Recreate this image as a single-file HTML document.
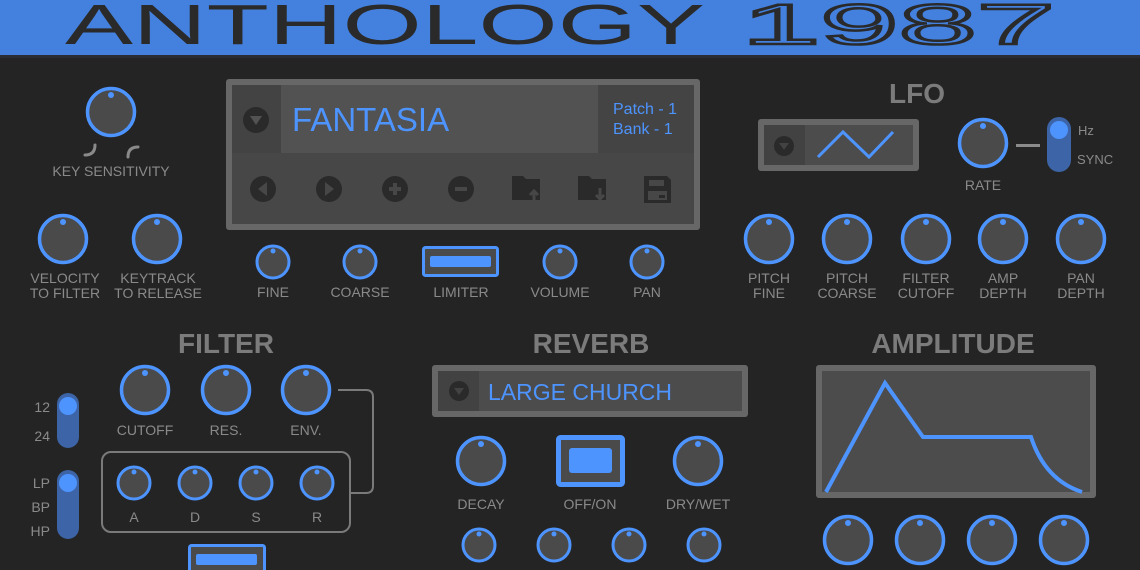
<!DOCTYPE html>
<html><head><meta charset="utf-8"><style>
html,body{margin:0;padding:0;background:#242424;}
svg{display:block}
text{font-family:"Liberation Sans",sans-serif;}
.lb{fill:#8a8a8a;font-size:14px;text-anchor:middle;}
.tt{fill:#7b7b7b;font-size:28px;text-anchor:middle;font-weight:bold;}
</style></head><body>
<svg width="1140" height="570" viewBox="0 0 1140 570" xmlns="http://www.w3.org/2000/svg">
<defs>
<g id="kb"><circle r="23.5" fill="#4a4a4a" stroke="#4d94ff" stroke-width="3.5"/><circle cx="0" cy="-17" r="3" fill="#4d94ff"/></g>
<g id="ks"><circle r="16" fill="#4a4a4a" stroke="#4d94ff" stroke-width="3"/><circle cx="0" cy="-11" r="2.5" fill="#4d94ff"/></g>
</defs>
<rect width="1140" height="570" fill="#242424"/>
<!-- header -->
<rect x="0" y="0" width="1140" height="55" fill="#4481de"/>
<rect x="0" y="55" width="1140" height="3" fill="#2a2d33"/>
<text x="65" y="44" font-size="57" fill="#2a2a2a" textLength="640" lengthAdjust="spacingAndGlyphs">ANTHOLOGY</text>
<text x="742" y="44" font-size="57" fill="none" stroke="#2a2a2a" stroke-width="2.5" textLength="313" lengthAdjust="spacingAndGlyphs">1987</text>

<!-- key sensitivity -->
<use href="#kb" x="111" y="112"/>
<path d="M95 145 q0 10 -10 10" fill="none" stroke="#8a8a8a" stroke-width="3" stroke-linecap="round"/>
<path d="M128 157 q0 -10 10 -10" fill="none" stroke="#8a8a8a" stroke-width="3" stroke-linecap="round"/>
<text class="lb" x="111" y="176">KEY SENSITIVITY</text>
<use href="#kb" x="63" y="239"/>
<use href="#kb" x="157" y="239"/>
<text class="lb" x="65" y="283">VELOCITY</text><text class="lb" x="65" y="298">TO FILTER</text>
<text class="lb" x="158" y="283">KEYTRACK</text><text class="lb" x="158" y="298">TO RELEASE</text>

<!-- display -->
<rect x="226" y="79" width="474" height="151" rx="3" fill="#676767"/>
<rect x="232" y="85" width="462" height="139" fill="#474747"/>
<rect x="232" y="85" width="49" height="68" fill="#434343"/>
<rect x="281" y="85" width="317" height="68" fill="#525252"/>
<rect x="598" y="85" width="96" height="68" fill="#444"/>
<circle cx="256" cy="120" r="13" fill="#2a2a2a"/><path d="M250 116 h12 l-6 9z" fill="#525252"/>
<text x="292" y="131" font-size="33" fill="#4d94ff">FANTASIA</text>
<text x="613" y="114" font-size="16" fill="#4d94ff">Patch - 1</text>
<text x="613" y="134" font-size="16" fill="#4d94ff">Bank - 1</text>
<g fill="#2a2a2a">
<circle cx="263" cy="189" r="13"/><circle cx="329" cy="189" r="13"/><circle cx="395" cy="189" r="13"/><circle cx="461" cy="189" r="13"/>
<path d="M512 176 h11 l3 3 h14 v21 h-28z"/><path d="M578 176 h11 l3 3 h14 v21 h-28z"/>
<path d="M644 176 h23 l4 4 v23 h-27z"/>
</g>
<path d="M267 182 l-9 7 9 7z" fill="#474747"/><path d="M325 182 l9 7 -9 7z" fill="#474747"/>
<path d="M389 189 h12 M395 183 v12" stroke="#474747" stroke-width="4"/>
<path d="M455 189 h12" stroke="#474747" stroke-width="4"/>
<path d="M534 202 v-10 M530 195 l4 -4 4 4" stroke="#474747" stroke-width="3" fill="none"/>
<path d="M600 188 v10 M596 195 l4 4 4 -4" stroke="#474747" stroke-width="3" fill="none"/>
<rect x="649" y="180" width="15" height="6" fill="#474747"/><rect x="648" y="191" width="19" height="9" fill="#474747"/><rect x="659" y="195" width="6" height="3" fill="#2a2a2a"/>

<use href="#ks" x="273" y="262"/><use href="#ks" x="360" y="262"/><use href="#ks" x="560" y="262"/><use href="#ks" x="647" y="262"/>
<rect x="423.5" y="247.5" width="74" height="28" rx="2" fill="#4a4a4a" stroke="#4d94ff" stroke-width="3"/>
<rect x="430" y="256" width="61" height="11" rx="2" fill="#4d94ff"/>
<text class="lb" x="273" y="297">FINE</text><text class="lb" x="360" y="297">COARSE</text><text class="lb" x="461" y="297">LIMITER</text><text class="lb" x="560" y="297">VOLUME</text><text class="lb" x="647" y="297">PAN</text>

<!-- LFO -->
<text class="tt" x="917" y="103">LFO</text>
<rect x="758" y="119" width="161" height="52" rx="3" fill="#676767"/>
<rect x="764" y="125" width="149" height="40" fill="#4c4c4c"/>
<rect x="764" y="125" width="41" height="40" fill="#424242"/>
<circle cx="784" cy="146" r="10" fill="#2a2a2a"/><path d="M779 143 h10 l-5 7z" fill="#424242"/>
<path d="M818 157 L843 132 L869 157 L893 132" fill="none" stroke="#4d94ff" stroke-width="3"/>
<use href="#kb" x="983" y="143"/>
<rect x="1016" y="144" width="24" height="3" fill="#8a8a8a"/>
<rect x="1047" y="117" width="24" height="55" rx="12" fill="#3c64a6"/>
<circle cx="1059" cy="130" r="9" fill="#4d94ff"/>
<text x="1078" y="135" font-size="13" fill="#8a8a8a">Hz</text>
<text x="1077" y="164" font-size="13" fill="#8a8a8a">SYNC</text>
<text class="lb" x="983" y="190">RATE</text>
<use href="#kb" x="769" y="239"/><use href="#kb" x="847" y="239"/><use href="#kb" x="926" y="239"/><use href="#kb" x="1003" y="239"/><use href="#kb" x="1081" y="239"/>
<text class="lb" x="769" y="283">PITCH</text><text class="lb" x="769" y="298">FINE</text>
<text class="lb" x="847" y="283">PITCH</text><text class="lb" x="847" y="298">COARSE</text>
<text class="lb" x="926" y="283">FILTER</text><text class="lb" x="926" y="298">CUTOFF</text>
<text class="lb" x="1003" y="283">AMP</text><text class="lb" x="1003" y="298">DEPTH</text>
<text class="lb" x="1081" y="283">PAN</text><text class="lb" x="1081" y="298">DEPTH</text>

<!-- FILTER -->
<text class="tt" x="226" y="353">FILTER</text>
<rect x="57" y="393" width="22" height="55" rx="11" fill="#3c64a6"/><circle cx="68" cy="406" r="9" fill="#4d94ff"/>
<rect x="57" y="470" width="22" height="69" rx="11" fill="#3c64a6"/><circle cx="68" cy="483" r="9" fill="#4d94ff"/>
<text x="50" y="412" font-size="14" fill="#8a8a8a" text-anchor="end">12</text>
<text x="50" y="441" font-size="14" fill="#8a8a8a" text-anchor="end">24</text>
<text x="50" y="488" font-size="14" fill="#8a8a8a" text-anchor="end">LP</text>
<text x="50" y="512" font-size="14" fill="#8a8a8a" text-anchor="end">BP</text>
<text x="50" y="536" font-size="14" fill="#8a8a8a" text-anchor="end">HP</text>
<use href="#kb" x="145" y="390"/><use href="#kb" x="226" y="390"/><use href="#kb" x="306" y="390"/>
<text class="lb" x="145" y="435">CUTOFF</text><text class="lb" x="226" y="435">RES.</text><text class="lb" x="306" y="435">ENV.</text>
<path d="M338 390 H366 q7 0 7 7 V486 q0 7 -7 7 H351" fill="none" stroke="#7a7a7a" stroke-width="2"/>
<rect x="102" y="452" width="248" height="80" rx="9" fill="none" stroke="#7a7a7a" stroke-width="2"/>
<use href="#ks" x="134" y="483"/><use href="#ks" x="195" y="483"/><use href="#ks" x="256" y="483"/><use href="#ks" x="317" y="483"/>
<text class="lb" x="134" y="522">A</text><text class="lb" x="195" y="522">D</text><text class="lb" x="256" y="522">S</text><text class="lb" x="317" y="522">R</text>
<rect x="189.5" y="545.5" width="75" height="30" rx="2" fill="#4a4a4a" stroke="#4d94ff" stroke-width="3"/>
<rect x="196" y="554" width="61" height="11" rx="2" fill="#4d94ff"/>

<!-- REVERB -->
<text class="tt" x="591" y="353">REVERB</text>
<rect x="432" y="365" width="316" height="52" rx="3" fill="#676767"/>
<rect x="438" y="371" width="304" height="40" fill="#4c4c4c"/>
<rect x="438" y="371" width="41" height="40" fill="#424242"/>
<circle cx="459" cy="391" r="10" fill="#2a2a2a"/><path d="M454 388 h10 l-5 7z" fill="#424242"/>
<text x="488" y="400" font-size="23" fill="#4d94ff">LARGE CHURCH</text>
<use href="#kb" x="481" y="461"/><use href="#kb" x="698" y="461"/>
<rect x="558.5" y="437.5" width="64" height="47" rx="2" fill="#4a4a4a" stroke="#4d94ff" stroke-width="5"/>
<rect x="569" y="448" width="43" height="25" rx="3" fill="#4d94ff"/>
<text class="lb" x="481" y="509">DECAY</text><text class="lb" x="590" y="509">OFF/ON</text><text class="lb" x="698" y="509">DRY/WET</text>
<use href="#ks" x="479" y="545"/><use href="#ks" x="554" y="545"/><use href="#ks" x="629" y="545"/><use href="#ks" x="704" y="545"/>

<!-- AMPLITUDE -->
<text class="tt" x="953" y="353">AMPLITUDE</text>
<rect x="816" y="365" width="280" height="133" rx="3" fill="#676767"/>
<rect x="822" y="371" width="268" height="121" fill="#4c4c4c"/>
<path d="M826 492 L885 383 L923 437 L1031 437 Q1045 480 1082 492" fill="none" stroke="#4d94ff" stroke-width="4"/>
<use href="#kb" x="848" y="540"/><use href="#kb" x="920" y="540"/><use href="#kb" x="992" y="540"/><use href="#kb" x="1064" y="540"/>
</svg>
</body></html>
